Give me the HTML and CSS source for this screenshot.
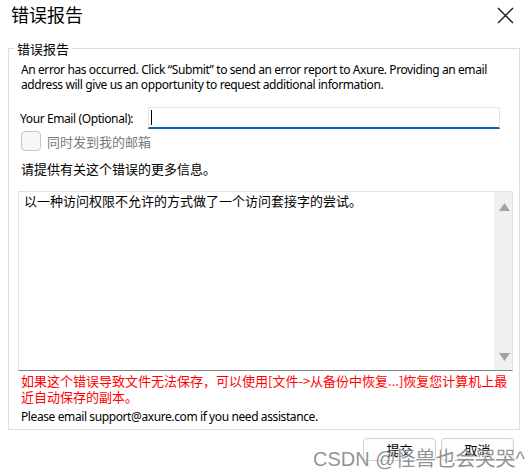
FILE: index.html
```html
<!DOCTYPE html>
<html lang="zh-CN">
<head>
<meta charset="utf-8">
<title>错误报告</title>
<link rel="stylesheet" href="styles.css">
</head>
<body>
<div class="dialog">
  <header class="titlebar">
    <h1 class="title">错误报告</h1>
    <button class="close" aria-label="关闭">
      <svg width="17" height="17" viewBox="0 0 17 17"><path d="M1 1 L16 16 M16 1 L1 16" stroke="#1a1a1a" stroke-width="1.4" fill="none"/></svg>
    </button>
  </header>
  <fieldset class="group">
    <legend class="legend">错误报告</legend>
    <div class="group-body">
      <p class="intro">An error has occurred. Click “Submit” to send an error report to Axure. Providing an email<br>address will give us an opportunity to request additional information.</p>
      <div class="email-row">
        <label class="email-label">Your Email (Optional):</label>
        <div class="input"><span class="caret"></span></div>
      </div>
      <label class="check"><span class="box"></span><span class="check-text">同时发到我的邮箱</span></label>
      <p class="prompt">请提供有关这个错误的更多信息。</p>
      <div class="textarea">
        <div class="ta-text">以一种访问权限不允许的方式做了一个访问套接字的尝试。</div>
        <div class="scrollbar">
          <svg class="arrow" width="11" height="8" viewBox="0 0 11 8"><path d="M5.5 0 L11 8 L0 8 Z" fill="#a3a3a3"/></svg>
          <svg class="arrow" width="11" height="8" viewBox="0 0 11 8"><path d="M0 0 L11 0 L5.5 8 Z" fill="#a3a3a3"/></svg>
        </div>
      </div>
      <p class="warn">如果这个错误导致文件无法保存，可以使用[文件-&gt;从备份中恢复...]恢复您计算机上最<br>近自动保存的副本。</p>
      <p class="support">Please email support@axure.com if you need assistance.</p>
    </div>
  </fieldset>
  <div class="buttons">
    <button class="btn">提交</button>
    <button class="btn">取消</button>
  </div>
  <div class="watermark">CSDN @怪兽也会哭哭^</div>
</div>
</body>
</html>
```

FILE: styles.css
```css
* { box-sizing: border-box; }
html, body { margin: 0; padding: 0; background: #fff; }
body {
  width: 531px;
  height: 476px;
  overflow: hidden;
  font-family: "Noto Sans", "Noto Sans CJK SC", sans-serif;
  font-size: 12px;
  letter-spacing: -0.4px;
  color: #000;
}
.dialog { position: relative; width: 531px; height: 476px; }

.titlebar {
  height: 40px;
  display: flex;
  justify-content: space-between;
  align-items: flex-start;
  padding: 1px 17px 0 11px;
}
.title {
  margin: 0;
  font-family: "Noto Sans CJK SC", sans-serif;
  font-size: 18px;
  font-weight: normal;
  line-height: 26px;
  letter-spacing: 0;
}
.close {
  width: 17px;
  height: 17px;
  margin-top: 6px;
  padding: 0;
  border: 0;
  background: none;
}
.close svg { display: block; }

.group {
  margin: 0 11px 0 8px;
  border: 1px solid #dcdcdc;
  padding: 0 6px 5px 5px;
  min-inline-size: auto;
}
.legend {
  padding: 0 3px;
  font-family: "Noto Sans CJK SC", sans-serif;
  font-size: 13px;
  line-height: 17px;
  letter-spacing: 0;
}
.group-body { padding: 5px 0 0 4px; }

.intro { margin: 0 0 0 3px; line-height: 15px; white-space: nowrap; }

.email-row {
  display: flex;
  align-items: center;
  margin-top: 15px;
}
.email-label { width: 130px; padding-left: 2px; }
.input {
  width: 352px;
  height: 22px;
  border: 1px solid #e5e5e5;
  border-bottom: 2px solid #0067c0;
  display: flex;
  align-items: center;
  padding-left: 2px;
}
.caret { width: 1px; height: 15px; background: #000; }

.check {
  display: flex;
  align-items: center;
  gap: 6px;
  margin: 2px 0 0 3px;
  color: #7a7a7a;
  font-family: "Noto Sans CJK SC", sans-serif;
  font-size: 13px;
  letter-spacing: 0;
}
.box {
  width: 20px;
  height: 20px;
  border: 1px solid #c6c6c6;
  border-radius: 4px;
  background: #f7f7f7;
}

.prompt {
  margin: 9px 0 0 3px;
  font-family: "Noto Sans CJK SC", sans-serif;
  font-size: 13px;
  line-height: 17px;
  letter-spacing: 0;
}

.textarea {
  margin-top: 14px;
  height: 180px;
  display: flex;
  border: 1px solid #e3e3e3;
  border-bottom: 1px solid #868686;
}
.ta-text {
  flex: 1;
  padding: 0 0 0 5px;
  font-family: "Noto Sans CJK SC", sans-serif;
  font-size: 13px;
  line-height: 17px;
  letter-spacing: 0;
}
.scrollbar {
  width: 18px;
  background: #f0f0f0;
  display: flex;
  flex-direction: column;
  justify-content: space-between;
  align-items: center;
  padding: 11px 0 9px 2px;
}
.arrow { display: block; }

.warn {
  margin: 2px 0 0 3px;
  color: #ff0000;
  font-family: "Noto Sans CJK SC", sans-serif;
  font-size: 13px;
  line-height: 16px;
  letter-spacing: 0;
  white-space: nowrap;
}
.support { margin: 4px 0 0 3px; line-height: 15px; }

.buttons {
  display: flex;
  justify-content: flex-end;
  gap: 5px;
  margin: 8px 17px 0 0;
}
.btn {
  width: 73px;
  height: 23px;
  padding: 0;
  border: 1px solid #d0d0d0;
  border-radius: 4px;
  background: #fdfdfd;
  font-family: "Noto Sans CJK SC", sans-serif;
  font-size: 13px;
  letter-spacing: 0;
  color: #000;
}

.watermark {
  position: absolute;
  left: 313px;
  top: 446px;
  white-space: nowrap;
  font-family: "Liberation Sans", "Noto Sans CJK SC", sans-serif;
  font-size: 20px;
  line-height: 26px;
  letter-spacing: 0;
  color: rgba(110, 110, 110, 0.75);
  text-shadow: 1px 1px 0 rgba(255, 255, 255, 0.8);
}
```
